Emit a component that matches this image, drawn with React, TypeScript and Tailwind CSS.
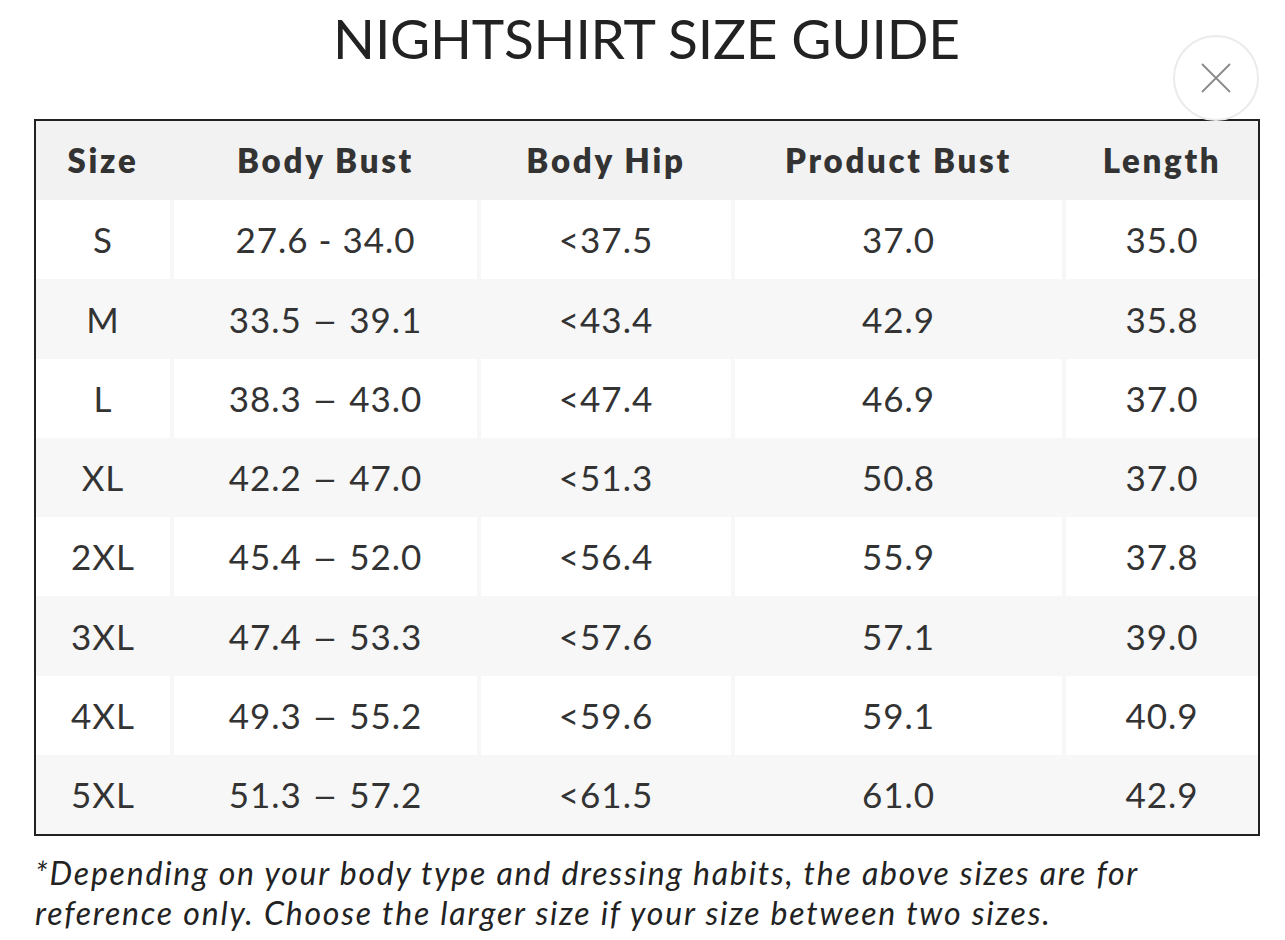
import React from "react";

const rows = [
  ["S", "27.6 - 34.0", "<37.5", "37.0", "35.0"],
  ["M", "33.5 – 39.1", "<43.4", "42.9", "35.8"],
  ["L", "38.3 – 43.0", "<47.4", "46.9", "37.0"],
  ["XL", "42.2 – 47.0", "<51.3", "50.8", "37.0"],
  ["2XL", "45.4 – 52.0", "<56.4", "55.9", "37.8"],
  ["3XL", "47.4 – 53.3", "<57.6", "57.1", "39.0"],
  ["4XL", "49.3 – 55.2", "<59.6", "59.1", "40.9"],
  ["5XL", "51.3 – 57.2", "<61.5", "61.0", "42.9"],
];

const headers = ["Size", "Body Bust", "Body Hip", "Product Bust", "Length"];
const cols = "grid grid-cols-[134px_303px_250px_327px_192px] gap-x-[4px]";

function Cell({ text }: { text: string }) {
  if (text.includes("–")) {
    const [a, b] = text.split(" – ");
    return (
      <span>
        {a}
        <span className="inline-block scale-x-[1.3] mx-[13px]">–</span>
        {b}
      </span>
    );
  }
  return <span>{text}</span>;
}

export default function App() {
  return (
    <div
      className="w-[1285px] h-[940px] bg-white relative overflow-hidden text-[#333]"
      style={{ fontFamily: "Lato, 'Open Sans', sans-serif" }}
    >
      <div className="h-[119px] flex justify-center pt-[6px]">
        <h1 className="text-[55px] leading-[64px] font-normal text-[#222] tracking-[-0.2px] ml-[8px]">
          NIGHTSHIRT SIZE GUIDE
        </h1>
      </div>
      <button className="absolute left-[1173px] top-[35px] w-[86px] h-[86px] rounded-full border-2 border-[#ebebeb] bg-white flex items-center justify-center">
        <svg width="32" height="32" viewBox="0 0 32 32" fill="none">
          <path d="M2 2L30 30M30 2L2 30" stroke="#8a8a8a" strokeWidth="1.8" />
        </svg>
      </button>
      <div className="ml-[34px] w-[1226px] border-2 border-[#222] bg-[#f7f7f7]">
        <div className={`${cols} h-[79px] bg-[#f2f2f2] items-center text-center text-[33px] font-extrabold tracking-[2.7px]`}>
          {headers.map((h) => (
            <div key={h}>{h}</div>
          ))}
        </div>
        {rows.map((r, i) => (
          <div key={r[0]} className={`${cols} h-[79.25px]`}>
            {r.map((c, j) => (
              <div
                key={j}
                className={`${i % 2 === 0 ? "bg-white" : "bg-[#f7f7f7]"} flex items-center justify-center text-[35px] tracking-[1px]`}
              >
                <Cell text={c} />
              </div>
            ))}
          </div>
        ))}
      </div>
      <p className="ml-[35px] mt-[17px] w-[1150px] text-[32px] leading-[40px] italic tracking-[1.8px] text-[#222]">
        *Depending on your body type and dressing habits, the above sizes are for reference only. Choose the larger size if your size between two sizes.
      </p>
    </div>
  );
}
